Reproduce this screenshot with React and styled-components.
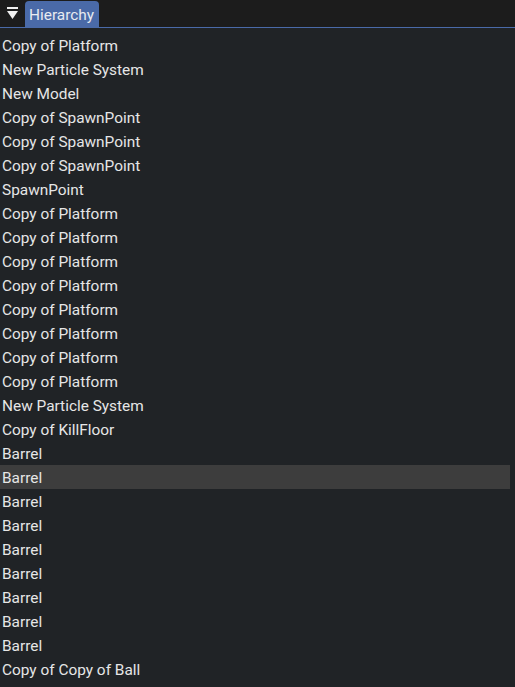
import React from 'react';
import styled, { createGlobalStyle } from 'styled-components';

const items = [
  'Copy of Platform',
  'New Particle System',
  'New Model',
  'Copy of SpawnPoint',
  'Copy of SpawnPoint',
  'Copy of SpawnPoint',
  'SpawnPoint',
  'Copy of Platform',
  'Copy of Platform',
  'Copy of Platform',
  'Copy of Platform',
  'Copy of Platform',
  'Copy of Platform',
  'Copy of Platform',
  'Copy of Platform',
  'New Particle System',
  'Copy of KillFloor',
  'Barrel',
  'Barrel',
  'Barrel',
  'Barrel',
  'Barrel',
  'Barrel',
  'Barrel',
  'Barrel',
  'Barrel',
  'Copy of Copy of Ball',
];

const Global = createGlobalStyle`
  html, body {
    margin: 0;
    padding: 0;
    background: #202326;
  }
  body {
    font-family: Roboto, "Liberation Sans", sans-serif;
  }
`;

const Panel = styled.div`
  width: 515px;
  height: 687px;
  background: #202326;
  overflow: hidden;
`;

const TabBar = styled.div`
  display: flex;
  align-items: flex-end;
  height: 27px;
  background: #1c1c1c;
  border-bottom: 1px solid #4a6aa8;
`;

const Collapse = styled.div`
  width: 25px;
  height: 27px;
  display: flex;
  align-items: center;
  justify-content: center;
  padding-right: 1px;
  box-sizing: border-box;
`;

const Tab = styled.div`
  height: 26px;
  padding: 0 5px 0 4px;
  background: #4a6aa8;
  border-radius: 4px 4px 0 0;
  color: #e8ebf0;
  font-size: 15.4px;
  line-height: 28px;
`;

const List = styled.div`
  padding-top: 5px;
  padding-right: 5px;
`;

const Row = styled.div`
  height: 24px;
  line-height: 26px;
  padding-left: 2px;
  font-size: 15.4px;
  color: #e6e6e6;
  white-space: nowrap;
  background: ${(p) => (p.$selected ? '#3d3d3d' : 'transparent')};
`;

export default function App() {
  return (
    <>
      <Global />
      <Panel>
        <TabBar>
          <Collapse>
            <svg width="11" height="13" viewBox="0 0 11 13">
              <rect x="0" y="0" width="11" height="2" fill="#f0f0f0" />
              <polygon points="0,4 11,4 5.5,12" fill="#f0f0f0" />
            </svg>
          </Collapse>
          <Tab>Hierarchy</Tab>
        </TabBar>
        <List>
          {items.map((name, i) => (
            <Row key={i} $selected={i === 18}>
              {name}
            </Row>
          ))}
        </List>
      </Panel>
    </>
  );
}
